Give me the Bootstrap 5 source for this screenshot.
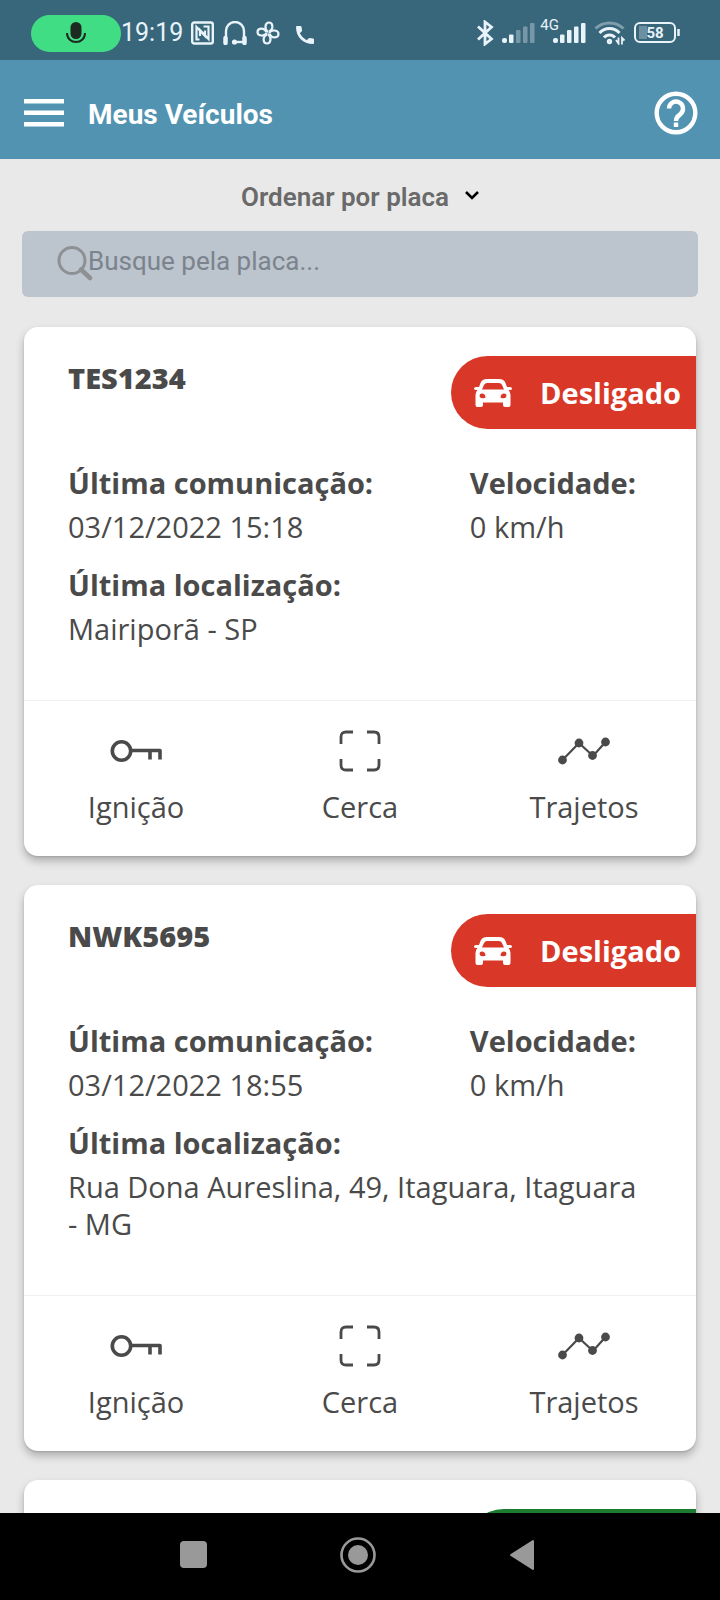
<!DOCTYPE html>
<html lang="pt-BR">
<head>
<meta charset="utf-8">
<meta name="viewport" content="width=device-width, initial-scale=1">
<title>Meus Veículos</title>
<link href="https://cdn.jsdelivr.net/npm/bootstrap@5.3.0/dist/css/bootstrap.min.css" rel="stylesheet">
<style>
  body { background: #e9e9e9; color: #4a4a4a; font-family: Roboto, sans-serif; }
  svg { display: block; flex: none; }
  .statusbar { background: #38667b; color: #e9f3fa; height: 60px; padding: 6px 40px 0 31px; }
  .mic-pill { background: #40dd84; width: 90px; height: 37px; }
  .clock { font-size: 25px; line-height: 28px; }
  .net-label { font-size: 15px; line-height: 14px; margin: -16px -6px 0 5px; }
  .appbar { background: #5193b1; height: 99px; padding: 6px 22px 0 24px; }
  .appbar h1 { font-size: 28px; line-height: 36px; font-weight: 700; margin-left: 24px; padding-top: 4px; }
  .vehicle-area { overflow-y: auto; scrollbar-width: none; min-height: 0; }
  .vehicle-area::-webkit-scrollbar { display: none; }
  .sort-row { height: 72px; padding-top: 4px; }
  .sort-row select { appearance: none; border: 0; background: none; color: #6a6a6a; font-size: 26px; line-height: 32px; font-weight: 600; padding: 0; }
  .search-box { background: #bcc4ce; border-radius: 6px; height: 66px; margin: 0 22px 30px; padding: 0 36px 0 35px; }
  .search-box input { font-size: 26px; line-height: 32px; color: #5c646c; margin-left: -5px; padding: 0 0 6px; }
  .search-box input::placeholder { color: #7b838c; opacity: 1; }
  .vehicle-card { border: 0; border-radius: 14px; margin: 0 24px 29px; color: #4a4a4a; font-family: "Open Sans", sans-serif; font-size: 29px; line-height: 37px;
    box-shadow: 0 5px 8px rgba(0,0,0,.25), 0 1px 2px rgba(0,0,0,.12); }
  .vehicle-card h2 { font-size: 29px; line-height: 37px; font-weight: 800; padding: 3px 0 0 44px; }
  .vehicle-head { padding-top: 29px; }
  .state-tag { height: 73px; border-radius: 37px 0 0 37px; background: #d93829; color: #fff; font-weight: 700; padding: 0 15px 0 23px; gap: 28px; }
  .state-tag.running { background: #1d7b30; width: 229px; }
  .vehicle-info { padding: 35px 44px 53px; }
  .info-pair { padding-right: 16px; margin-bottom: 21px; }
  .vehicle-info dt { font-weight: 700; margin-bottom: 7px; }
  .vehicle-actions { border-top: 1px solid #f1f1f1; }
  .vehicle-actions button { border: 0; background: none; color: #4a4a4a; padding: 28px 0 31px; gap: 15px; }
  .sysnav { background: #000; height: 87px; padding: 0 5px 4px 0; }
  .sysnav button { border: 0; background: none; width: 164px; padding: 0; }
</style>
</head>
<body class="vh-100 d-flex flex-column overflow-hidden">

<svg class="d-none">
  <symbol id="car" viewBox="0 0 38 30"><path fill="#fff" fill-rule="evenodd" d="M13 1h12q5 0 6.500 4l1.500 4h3q2 0 2 1.500T36 12h-1.500q2 2 2 5v10q0 2-2 2H31q-2 0-2-2v-2.500H9V27q0 2-2 2H3.500q-2 0-2-2V17q0-3 2-5H2q-2 0-2-1.500T2 9h3l1.500-4Q8 1 13 1zm0 4q-2 0-3 2l-2 4.500h22L28 7q-1-2-3-2zM8 15.500q-2.500 0-2.500 2.200T8 20.200q3.500 0 3.500-1Q11 15.500 8 15.500zm22 0q-3 0-3.500 3.700 0 1 3.500 1 2.500-.3 2.500-2.500t-2.500-2.200z"/></symbol>
  <symbol id="key" viewBox="0 0 52 44"><g fill="none" stroke="#4a4a4a" stroke-width="3.600"><circle cx="11.500" cy="22" r="9.200"/><path d="M21 21.500h29v9M40 21.500v9" stroke-linejoin="round"/></g></symbol>
  <symbol id="fence" viewBox="0 0 44 44"><path fill="none" stroke="#4a4a4a" stroke-width="2.800" d="M3 15V8q0-5 5-5h7M29 3h7q5 0 5 5v7M41 30v6q0 5-5 5h-7M15 41H8q-5 0-5-5v-6"/></symbol>
  <symbol id="route" viewBox="0 0 52 44"><path fill="none" stroke="#4a4a4a" stroke-width="2.200" d="M4.500 31 21 14l14 13L47.500 13"/><g fill="#4a4a4a"><circle cx="4.500" cy="31" r="4.400"/><circle cx="21" cy="14" r="4.400"/><circle cx="34.500" cy="26.500" r="4.400"/><circle cx="47.500" cy="13" r="4.400"/></g></symbol>
</svg>

<div class="statusbar flex-shrink-0 d-flex align-items-center">
  <div class="mic-pill rounded-pill d-flex align-items-center justify-content-center">
    <svg width="20" height="24" viewBox="0 0 20 24"><rect x="4.500" y="1" width="11" height="17" rx="5.500" fill="#1d2a22"/><path d="M1 12c0 12 18 12 18 0" fill="none" stroke="#1d2a22" stroke-width="2"/></svg>
  </div>
  <span class="clock">19:19</span>
  <svg class="ms-2" width="23" height="24" viewBox="0 0 23 24" fill="none" stroke="#e9f3fa"><rect x="1.200" y="1.500" width="20.600" height="21" rx="2" stroke-width="2.400"/><path d="M8.500 18.500H5.500V6l8.500 9V9.500M12.500 5.500h5V18L9 9v6" stroke-width="2.200"/></svg>
  <svg class="ms-2" width="26" height="24" viewBox="0 0 26 24" fill="none" stroke="#e9f3fa" stroke-width="2.400"><path d="M4 18V10a9 9 0 0 1 18 0v8"/><path d="M3.500 17v5M22.500 17v5" stroke-width="4.500" stroke-linecap="round"/><path d="M12.500 21h9"/><circle cx="12.500" cy="21" r="1.400" fill="#e9f3fa"/></svg>
  <svg class="ms-2" width="24" height="24" viewBox="-12 -12 24 24" fill="none" stroke="#e9f3fa" stroke-width="2.200"><g id="blade"><path d="M0-1C-4-4-3-10.500 1-10.500s5 6.500 0 9"/></g><use href="#blade" transform="rotate(90)"/><use href="#blade" transform="rotate(180)"/><use href="#blade" transform="rotate(270)"/></svg>
  <svg class="mt-1 ms-3" width="18" height="18" viewBox="0 0 18 18"><path fill="#e9f3fa" d="M1 0h3.500q1 0 1 1l.6 3.400q0 .6-.5 1.100L3.800 7.300q2.200 4.500 6.900 6.900l1.800-1.800q.5-.5 1.100-.5l3.400.6q1 0 1 1V17q0 1-1 1C7 18 0 11 0 1q0-1 1-1z"/></svg>

  <svg class="ms-auto" width="18" height="26" viewBox="0 0 18 26" fill="none" stroke="#e9f3fa" stroke-width="2.800"><path d="M2 6.500l13.500 12.500L9 24V2l6.500 5L2 19.500"/></svg>
  <svg class="ms-2" width="33" height="22" viewBox="0 0 33 22" fill="#e9f3fa"><rect y="16" width="5" height="5" rx="2"/><rect x="7" y="12.500" width="4.500" height="8.500" rx="1"/><g opacity=".35"><rect x="14" y="8" width="4.500" height="13" rx="1"/><rect x="21" y="4.500" width="4.500" height="16.500" rx="1"/><rect x="28" y="1" width="4.500" height="20" rx="1"/></g></svg>
  <span class="net-label">4G</span>
  <svg width="33" height="22" viewBox="0 0 33 22" fill="#e9f3fa"><rect y="16" width="5" height="5" rx="2"/><rect x="7" y="12.500" width="4.500" height="8.500" rx="1"/><rect x="14" y="8" width="4.500" height="13" rx="1"/><rect x="21" y="4.500" width="4.500" height="16.500" rx="1"/><rect x="28" y="1" width="4.500" height="20" rx="1"/></svg>
  <svg class="ms-2" width="32" height="24" viewBox="0 0 32 24" fill="none" stroke="#e9f3fa" stroke-width="3"><path d="M1.500 7.500C9 0 22 0 29.500 7.500" opacity=".4"/><path d="M5.500 12C11 6 20 6 25.500 12"/><path d="M10 16.500C13 13 18 13 21 16.500"/><circle cx="15.500" cy="20.500" r="1.200"/><path d="M22 19l2.500 3.500v-6M30.500 19.500L28 17v6.500" stroke-width="1.800"/></svg>
  <svg class="ms-2" width="46" height="22" viewBox="0 0 46 22"><rect x="1" y="1" width="40" height="19" rx="5" fill="none" stroke="#e9f3fa" stroke-width="2"/><path d="M5 4h8v13H5z" fill="#e9f3fa" opacity=".3"/><path d="M44.500 7v7" stroke="#e9f3fa" stroke-width="2.500"/><text x="21" y="16" text-anchor="middle" font-family="Roboto, sans-serif" font-size="15" font-weight="700" fill="#e9f3fa">58</text></svg>
</div>

<header class="appbar flex-shrink-0 d-flex align-items-center text-white">
  <button class="btn p-0 border-0" aria-label="Menu"><svg width="40" height="28" viewBox="0 0 40 28" fill="#fff"><path d="M0 0h40v4.500H0zM0 11.500h40V16H0zM0 23h40v4.500H0z"/></svg></button>
  <h1 class="mb-0">Meus Veículos</h1>
  <button class="btn p-0 border-0 ms-auto" aria-label="Ajuda"><svg width="44" height="44" viewBox="0 0 44 44" fill="none" stroke="#fff" stroke-width="4.400"><circle cx="22" cy="22" r="19.300"/><path d="M15 17.500a7 7 0 1 1 11.500 5.500C23.500 25.500 22 26.500 22 30"/><path d="M22 31.500v4.500"/></svg></button>
</header>

<main class="vehicle-area flex-grow-1">
  <div class="sort-row d-flex align-items-center justify-content-center gap-3">
    <select aria-label="Ordenar"><option>Ordenar por placa</option></select>
    <svg width="14" height="14" viewBox="0 0 14 14"><path d="M1 2l6 6 6-6" fill="none" stroke="#000" stroke-width="2.600"/></svg>
  </div>

  <div class="search-box d-flex align-items-center">
    <svg width="36" height="36" viewBox="0 0 36 36" fill="none" stroke="#8e9194"><circle cx="15" cy="14.500" r="13" stroke-width="3"/><path d="M24 23.500l9 8.500" stroke-width="4.500" stroke-linecap="round"/></svg>
    <input class="form-control border-0 bg-transparent shadow-none rounded-0" type="search" placeholder="Busque pela placa..." aria-label="Busque pela placa">
  </div>

  <article class="card vehicle-card">
    <div class="vehicle-head d-flex justify-content-between align-items-start">
      <h2 class="mb-0">TES1234</h2>
      <div class="state-tag d-flex align-items-center"><svg width="38" height="30"><use href="#car"/></svg>Desligado</div>
    </div>
    <div class="vehicle-info">
      <div class="info-pair d-flex justify-content-between">
        <dl class="mb-0"><dt>Última comunicação:</dt><dd class="mb-0">03/12/2022 15:18</dd></dl>
        <dl class="mb-0"><dt>Velocidade:</dt><dd class="mb-0">0 km/h</dd></dl>
      </div>
      <dl class="mb-0"><dt>Última localização:</dt><dd class="mb-0">Mairiporã - SP</dd></dl>
    </div>
    <div class="vehicle-actions row g-0">
      <button class="col d-flex flex-column align-items-center"><svg width="52" height="44"><use href="#key"/></svg>Ignição</button>
      <button class="col d-flex flex-column align-items-center"><svg width="44" height="44"><use href="#fence"/></svg>Cerca</button>
      <button class="col d-flex flex-column align-items-center"><svg width="52" height="44"><use href="#route"/></svg>Trajetos</button>
    </div>
  </article>

  <article class="card vehicle-card">
    <div class="vehicle-head d-flex justify-content-between align-items-start">
      <h2 class="mb-0">NWK5695</h2>
      <div class="state-tag d-flex align-items-center"><svg width="38" height="30"><use href="#car"/></svg>Desligado</div>
    </div>
    <div class="vehicle-info">
      <div class="info-pair d-flex justify-content-between">
        <dl class="mb-0"><dt>Última comunicação:</dt><dd class="mb-0">03/12/2022 18:55</dd></dl>
        <dl class="mb-0"><dt>Velocidade:</dt><dd class="mb-0">0 km/h</dd></dl>
      </div>
      <dl class="mb-0"><dt>Última localização:</dt><dd class="mb-0">Rua Dona Aureslina, 49, Itaguara, Itaguara - MG</dd></dl>
    </div>
    <div class="vehicle-actions row g-0">
      <button class="col d-flex flex-column align-items-center"><svg width="52" height="44"><use href="#key"/></svg>Ignição</button>
      <button class="col d-flex flex-column align-items-center"><svg width="44" height="44"><use href="#fence"/></svg>Cerca</button>
      <button class="col d-flex flex-column align-items-center"><svg width="52" height="44"><use href="#route"/></svg>Trajetos</button>
    </div>
  </article>

  <article class="card vehicle-card">
    <div class="vehicle-head d-flex justify-content-end">
      <div class="state-tag running"></div>
    </div>
  </article>
</main>

<nav class="sysnav flex-shrink-0 d-flex align-items-center justify-content-center">
  <button class="d-flex justify-content-center" aria-label="Recentes"><svg width="27" height="27"><rect width="27" height="27" rx="4" fill="#999"/></svg></button>
  <button class="d-flex justify-content-center" aria-label="Início"><svg width="36" height="36" viewBox="0 0 36 36"><circle cx="18" cy="18" r="16.500" fill="none" stroke="#999" stroke-width="2.600"/><circle cx="18" cy="18" r="10" fill="#999"/></svg></button>
  <button class="d-flex justify-content-center" aria-label="Voltar"><svg width="26" height="32" viewBox="0 0 26 32"><path d="M2 16L24 2v28z" fill="#999" stroke="#999" stroke-width="2" stroke-linejoin="round"/></svg></button>
</nav>

<script src="https://cdn.jsdelivr.net/npm/bootstrap@5.3.0/dist/js/bootstrap.bundle.min.js"></script>
</body>
</html>
